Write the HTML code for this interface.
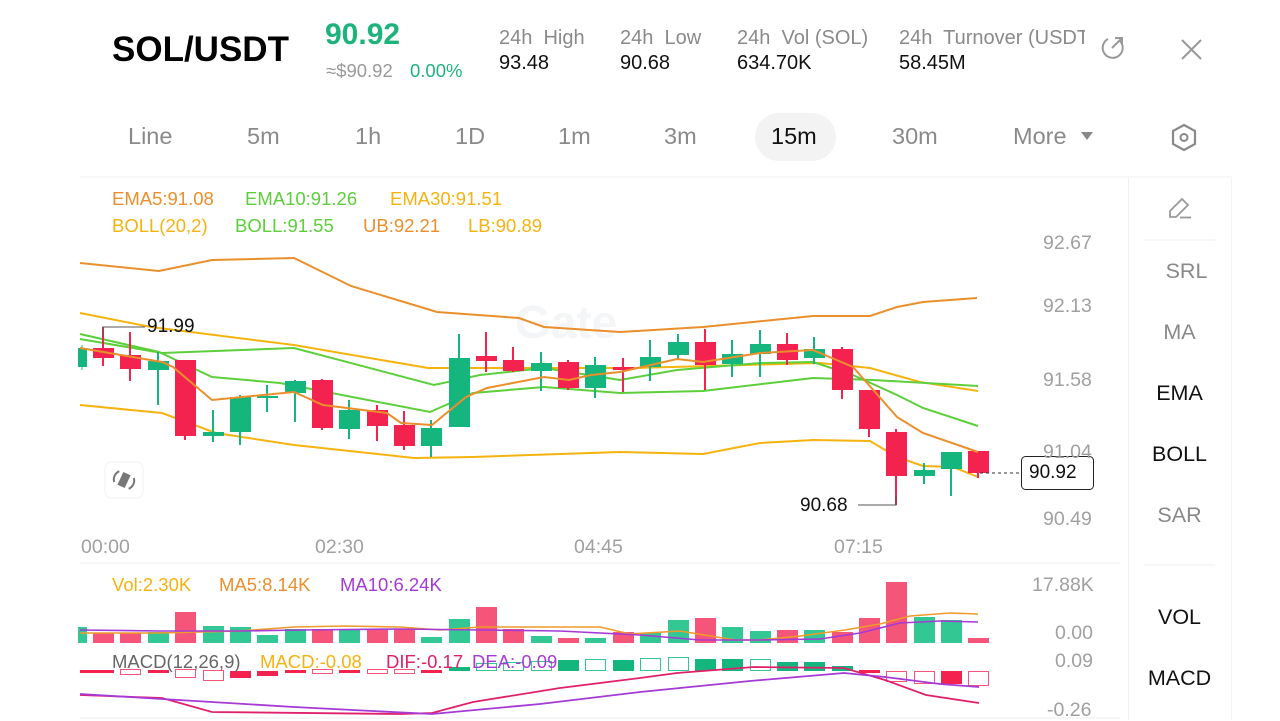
<!DOCTYPE html>
<html><head><meta charset="utf-8">
<style>
*{margin:0;padding:0;box-sizing:border-box}
body{width:1280px;height:720px;overflow:hidden;background:#fff;font-family:"Liberation Sans",Arial,sans-serif;position:relative}
.t{position:absolute;white-space:nowrap;line-height:1}
.g{color:#8a8a8a}
.ax{position:absolute;color:#a0a0a0;font-size:19.5px;line-height:1;white-space:nowrap}
.tab{position:absolute;top:125px;font-size:23.5px;color:#8a8a8a;line-height:1}
.sb{position:absolute;left:1128px;width:103px;text-align:center;font-size:21.5px;line-height:1}
.lg{font-size:18.5px}
</style></head><body>

<div class="t" style="left:112px;top:32px;font-size:35px;font-weight:bold;color:#000">SOL/USDT</div>
<div class="t" style="left:325px;top:20px;font-size:30px;font-weight:bold;color:#1eb27c">90.92</div>
<div class="t g" style="left:326px;top:62px;font-size:18.5px;color:#999">≈$90.92</div>
<div class="t" style="left:410px;top:62px;font-size:18.5px;color:#1eb27c">0.00%</div>
<div class="t g" style="left:499px;top:28px;font-size:20px">24h&nbsp; High</div>
<div class="t" style="left:499px;top:53px;font-size:20px;color:#111">93.48</div>
<div class="t g" style="left:620px;top:28px;font-size:20px">24h&nbsp; Low</div>
<div class="t" style="left:620px;top:53px;font-size:20px;color:#111">90.68</div>
<div class="t g" style="left:737px;top:28px;font-size:20px">24h&nbsp; Vol (SOL)</div>
<div class="t" style="left:737px;top:53px;font-size:20px;color:#111">634.70K</div>
<div class="t g" style="left:899px;top:28px;font-size:20px;width:186px;overflow:hidden">24h&nbsp; Turnover (USDT)</div>
<div class="t" style="left:899px;top:53px;font-size:20px;color:#111">58.45M</div>

<svg style="position:absolute;left:0;top:0" width="1280" height="720">
 <path d="M1120 41 A10 10 0 1 1 1108 39" fill="none" stroke="#999" stroke-width="2"/>
 <path d="M1112 48 L1122 38 M1115 38 L1122 38 L1122 45" fill="none" stroke="#999" stroke-width="2"/>
 <path d="M1182 40 L1201 59 M1201 40 L1182 59" stroke="#999" stroke-width="2"/>
 <path d="M1184 125 L1195 131 L1195 144 L1184 150 L1173 144 L1173 131 Z" fill="none" stroke="#888" stroke-width="2.2"/>
 <circle cx="1184" cy="137.5" r="3.5" fill="none" stroke="#888" stroke-width="2"/>
 <path d="M1081 132 L1093 132 L1087 140 Z" fill="#888"/>
 <line x1="80" y1="177" x2="1231" y2="177" stroke="#f0f0f0"/>
 <line x1="1128.5" y1="177" x2="1128.5" y2="720" stroke="#f0f0f0"/>
 <line x1="1231.5" y1="177" x2="1231.5" y2="720" stroke="#f4f4f4"/>
 <line x1="80" y1="563" x2="1120" y2="563" stroke="#eee"/>
 <line x1="80" y1="718" x2="1120" y2="718" stroke="#eee"/>
 <line x1="1144" y1="240" x2="1215" y2="240" stroke="#eee"/>
 <line x1="1144" y1="565" x2="1215" y2="565" stroke="#eee"/>
 <path d="M1170 217 L1170 211 L1182 199 L1188 205 L1176 217 Z" fill="none" stroke="#999" stroke-width="1.8"/>
 <line x1="1180" y1="217.5" x2="1191" y2="217.5" stroke="#999" stroke-width="1.8"/>
 <text x="515" y="338" font-size="46" font-weight="bold" fill="#f4f5f6" font-family="Liberation Sans">Gate</text>
 <rect x="105" y="462" width="38" height="36" rx="6" fill="#fff" stroke="#f2f2f2"/>
 <g transform="rotate(25 124 480)"><rect x="120" y="473" width="8" height="14" fill="#777"/>
 <path d="M116 474 A9 9 0 0 0 116 486 M132 474 A9 9 0 0 1 132 486" fill="none" stroke="#777" stroke-width="2"/></g>

 <polyline fill="none" stroke="#ea8f2c" stroke-width="2" points="80,263 159,271 212,260 294,258 351,286 437,312 519,318 544,327 620,332 703,327 813,316 870,316 897,307 923,302 977,298"/>
 <polyline fill="none" stroke="#f5b30f" stroke-width="2" points="80,313 151,327 294,345 428,368 634,368 820,363 870,368 920,382 978,391"/>
 <polyline fill="none" stroke="#5ccf3a" stroke-width="2" points="80,334 159,352 212,377 280,383 430,412 473,393 544,387 620,393 703,391 813,378 873,380 978,386"/>
 <polyline fill="none" stroke="#5ccf3a" stroke-width="2" points="80,339 162,353 294,348 434,385 480,375 544,368 620,380 677,370 760,363 813,362 853,375 897,395 923,408 978,426"/>
 <polyline fill="none" stroke="#f5b30f" stroke-width="2" points="80,405 162,413 216,433 294,445 414,458 473,457 620,452 703,454 760,443 813,440 870,441 897,457 923,466 953,467 978,477"/>

 <g fill="#15b57e" stroke="#15b57e"><line x1="82" y1="345" x2="82" y2="370"/><rect x="78" y="348" width="9" height="19" stroke="none"/></g>
 <g stroke-width="2">
 <g stroke="#f3224f" fill="#f3224f">
  <line x1="103" y1="327" x2="103" y2="366"/><rect x="93" y="348" width="21" height="10" stroke="none"/>
  <line x1="130" y1="332" x2="130" y2="381"/><rect x="120" y="355" width="21" height="14" stroke="none"/>
  <line x1="185" y1="360" x2="185" y2="440"/><rect x="175" y="360" width="21" height="76" stroke="none"/>
  <line x1="322" y1="379" x2="322" y2="430"/><rect x="312" y="380" width="21" height="48" stroke="none"/>
  <line x1="377" y1="405" x2="377" y2="441"/><rect x="367" y="410" width="21" height="16" stroke="none"/>
  <line x1="404" y1="411" x2="404" y2="450"/><rect x="394" y="425" width="21" height="21" stroke="none"/>
  <line x1="486" y1="332" x2="486" y2="372"/><rect x="476" y="356" width="21" height="5" stroke="none"/>
  <line x1="513" y1="347" x2="513" y2="372"/><rect x="503" y="360" width="21" height="11" stroke="none"/>
  <line x1="568" y1="360" x2="568" y2="390"/><rect x="558" y="362" width="21" height="26" stroke="none"/>
  <line x1="623" y1="358" x2="623" y2="392"/><rect x="613" y="367" width="21" height="3" stroke="none"/>
  <line x1="705" y1="329" x2="705" y2="390"/><rect x="695" y="342" width="21" height="23" stroke="none"/>
  <line x1="787" y1="333" x2="787" y2="365"/><rect x="777" y="344" width="21" height="16" stroke="none"/>
  <line x1="842" y1="347" x2="842" y2="399"/><rect x="832" y="349" width="21" height="41" stroke="none"/>
  <line x1="869" y1="390" x2="869" y2="437"/><rect x="859" y="390" width="21" height="39" stroke="none"/>
  <line x1="896" y1="429" x2="896" y2="505"/><rect x="886" y="432" width="21" height="44" stroke="none"/>
  <line x1="978" y1="451" x2="978" y2="478"/><rect x="968" y="451" width="21" height="22" stroke="none"/>
 </g>
 <g stroke="#15b57e" fill="#15b57e">
  <line x1="158" y1="352" x2="158" y2="405"/><rect x="148" y="361" width="21" height="9" stroke="none"/>
  <line x1="213" y1="410" x2="213" y2="442"/><rect x="203" y="432" width="21" height="4" stroke="none"/>
  <line x1="240" y1="395" x2="240" y2="445"/><rect x="230" y="397" width="21" height="35" stroke="none"/>
  <line x1="267" y1="385" x2="267" y2="412"/><rect x="257" y="396" width="21" height="2" stroke="none"/>
  <line x1="295" y1="380" x2="295" y2="422"/><rect x="285" y="381" width="21" height="12" stroke="none"/>
  <line x1="349" y1="400" x2="349" y2="439"/><rect x="339" y="410" width="21" height="19" stroke="none"/>
  <line x1="431" y1="420" x2="431" y2="457"/><rect x="421" y="428" width="21" height="18" stroke="none"/>
  <line x1="459" y1="334" x2="459" y2="427"/><rect x="449" y="358" width="21" height="69" stroke="none"/>
  <line x1="541" y1="352" x2="541" y2="391"/><rect x="531" y="363" width="21" height="8" stroke="none"/>
  <line x1="595" y1="357" x2="595" y2="398"/><rect x="585" y="365" width="21" height="23" stroke="none"/>
  <line x1="650" y1="340" x2="650" y2="381"/><rect x="640" y="357" width="21" height="10" stroke="none"/>
  <line x1="678" y1="334" x2="678" y2="360"/><rect x="668" y="342" width="21" height="13" stroke="none"/>
  <line x1="732" y1="340" x2="732" y2="377"/><rect x="722" y="354" width="21" height="10" stroke="none"/>
  <line x1="760" y1="330" x2="760" y2="377"/><rect x="750" y="344" width="21" height="10" stroke="none"/>
  <line x1="814" y1="337" x2="814" y2="364"/><rect x="804" y="349" width="21" height="9" stroke="none"/>
  <line x1="924" y1="463" x2="924" y2="484"/><rect x="914" y="470" width="21" height="6" stroke="none"/>
  <line x1="951" y1="452" x2="951" y2="496"/><rect x="941" y="452" width="21" height="17" stroke="none"/>
 </g>
 </g>
 <polyline fill="none" stroke="#ea8f2c" stroke-width="2" points="80,348 162,362 173,367 212,400 294,392 323,405 387,413 401,423 432,425 466,397 487,388 544,377 569,380 591,375 620,372 677,359 703,362 760,353 813,350 853,367 897,417 923,433 978,452"/>

 <polyline fill="none" stroke="#555" stroke-width="1" points="103,337 103,327 145,327"/>
 <polyline fill="none" stroke="#555" stroke-width="1" points="858,505 896,505 896,495"/>
 <line x1="980" y1="473" x2="1021" y2="473" stroke="#333" stroke-dasharray="3,3"/>
 <rect x="1021.5" y="456.5" width="72" height="33" rx="4" fill="#fff" stroke="#222"/>

 <g fill="#f6557a">
  <rect x="93" y="633" width="21" height="10"/><rect x="120" y="633" width="21" height="10"/><rect x="175" y="612" width="21" height="31"/>
  <rect x="312" y="629" width="21" height="14"/><rect x="367" y="629" width="21" height="14"/><rect x="394" y="629" width="21" height="14"/>
  <rect x="476" y="607" width="21" height="36"/><rect x="503" y="629" width="21" height="14"/><rect x="558" y="638" width="21" height="5"/>
  <rect x="613" y="632" width="21" height="11"/><rect x="695" y="618" width="21" height="25"/><rect x="777" y="630" width="21" height="13"/>
  <rect x="832" y="632" width="21" height="11"/><rect x="859" y="618" width="21" height="25"/><rect x="886" y="582" width="21" height="61"/>
  <rect x="968" y="638" width="21" height="5"/>
 </g>
 <g fill="#33c794">
  <rect x="78" y="627" width="9" height="16"/><rect x="148" y="632" width="21" height="11"/><rect x="203" y="626" width="21" height="17"/>
  <rect x="230" y="627" width="21" height="16"/><rect x="257" y="635" width="21" height="8"/><rect x="285" y="629" width="21" height="14"/>
  <rect x="339" y="629" width="21" height="14"/><rect x="421" y="637" width="21" height="6"/><rect x="449" y="619" width="21" height="24"/>
  <rect x="531" y="636" width="21" height="7"/><rect x="585" y="638" width="21" height="5"/><rect x="640" y="633" width="21" height="10"/>
  <rect x="668" y="620" width="21" height="23"/><rect x="722" y="627" width="21" height="16"/><rect x="750" y="631" width="21" height="12"/>
  <rect x="804" y="630" width="21" height="13"/><rect x="914" y="617" width="21" height="26"/><rect x="941" y="620" width="21" height="23"/>
 </g>
 <polyline fill="none" stroke="#f09a2a" stroke-width="1.6" points="80,633 160,633 240,631 294,627 345,626 400,627 440,630 480,627 540,627 600,627 630,634 680,631 735,640 760,640 800,636 845,630 880,624 910,616 950,613 978,614"/>
 <polyline fill="none" stroke="#a53ad6" stroke-width="1.6" points="80,630 160,631 240,631 300,630 400,629 480,630 560,631 640,635 700,640 760,640 820,639 860,633 900,623 940,621 978,622"/>

 <g fill="#f3224f"><rect x="80" y="670" width="14" height="3"/><rect x="93" y="670" width="21" height="3"/><rect x="148" y="670" width="21" height="3"/>
 <rect x="230" y="671" width="21" height="7"/><rect x="257" y="671" width="21" height="5"/><rect x="285" y="670" width="21" height="3"/><rect x="339" y="670" width="21" height="3"/><rect x="421" y="670" width="21" height="3"/>
 <rect x="859" y="670" width="21" height="3"/><rect x="941" y="671" width="21" height="13"/></g>
 <g fill="none" stroke="#f5557a" stroke-width="1"><rect x="120.5" y="669.5" width="20" height="5"/><rect x="175.5" y="669.5" width="20" height="8"/><rect x="203.5" y="670.5" width="20" height="10"/>
 <rect x="312.5" y="669.5" width="20" height="4"/><rect x="367.5" y="669.5" width="20" height="4"/><rect x="394.5" y="669.5" width="20" height="4"/>
 <rect x="886.5" y="671.5" width="20" height="10"/><rect x="914.5" y="671.5" width="20" height="12"/><rect x="968.5" y="671.5" width="20" height="14"/></g>
 <g fill="#15b57e"><rect x="449" y="667" width="21" height="4"/><rect x="558" y="660" width="21" height="11"/><rect x="613" y="660" width="21" height="11"/>
 <rect x="695" y="659" width="21" height="12"/><rect x="722" y="659" width="21" height="12"/><rect x="777" y="662" width="21" height="9"/><rect x="804" y="662" width="21" height="9"/><rect x="832" y="666" width="21" height="5"/></g>
 <g fill="none" stroke="#33c794" stroke-width="1"><rect x="476.5" y="663.5" width="20" height="7"/><rect x="503.5" y="662.5" width="20" height="8"/><rect x="531.5" y="661.5" width="20" height="9"/>
 <rect x="585.5" y="659.5" width="20" height="11"/><rect x="640.5" y="658.5" width="20" height="12"/><rect x="668.5" y="657.5" width="20" height="13"/><rect x="750.5" y="659.5" width="20" height="11"/></g>
 <polyline fill="none" stroke="#e0206a" stroke-width="1.8" points="80,695 162,698 212,712 401,714 432,713 473,702 560,688 640,678 677,673 754,667 844,668 885,680 926,695 979,703"/>
 <polyline fill="none" stroke="#a53ad6" stroke-width="1.8" points="80,694 294,707 432,714 540,704 640,692 750,681 844,673 885,677 940,684 979,687"/>
</svg>

<div class="t" style="left:147px;top:317px;font-size:19px;color:#111">91.99</div>
<div class="t" style="left:800px;top:496px;font-size:19px;color:#111">90.68</div>
<div class="t" style="left:1029px;top:463px;font-size:19px;color:#111">90.92</div>

<div class="tab" style="left:128px">Line</div>
<div class="tab" style="left:247px">5m</div>
<div class="tab" style="left:355px">1h</div>
<div class="tab" style="left:455px">1D</div>
<div class="tab" style="left:558px">1m</div>
<div class="tab" style="left:664px">3m</div>
<div style="position:absolute;left:755px;top:113px;width:81px;height:48px;border-radius:24px;background:#f3f3f3"></div>
<div class="tab" style="left:771px;color:#111">15m</div>
<div class="tab" style="left:892px">30m</div>
<div class="tab" style="left:1013px">More</div>

<div class="t lg" style="left:112px;top:190px;color:#ea8f2c">EMA5:91.08</div>
<div class="t lg" style="left:245px;top:190px;color:#5ccf3a">EMA10:91.26</div>
<div class="t lg" style="left:390px;top:190px;color:#f5b30f">EMA30:91.51</div>
<div class="t lg" style="left:112px;top:217px;color:#f5b30f">BOLL(20,2)</div>
<div class="t lg" style="left:235px;top:217px;color:#5ccf3a">BOLL:91.55</div>
<div class="t lg" style="left:363px;top:217px;color:#ea8f2c">UB:92.21</div>
<div class="t lg" style="left:468px;top:217px;color:#f5b30f">LB:90.89</div>

<div class="t lg" style="left:112px;top:576px;color:#f5b30f">Vol:2.30K</div>
<div class="t lg" style="left:219px;top:576px;color:#ea8f2c">MA5:8.14K</div>
<div class="t lg" style="left:340px;top:576px;color:#a53ad6">MA10:6.24K</div>
<div class="t lg" style="left:112px;top:653px;color:#666">MACD(12,26,9)</div>
<div class="t lg" style="left:260px;top:653px;color:#f5b30f">MACD:-0.08</div>
<div class="t lg" style="left:386px;top:653px;color:#e0206a">DIF:-0.17</div>
<div class="t lg" style="left:472px;top:653px;color:#a53ad6">DEA:-0.09</div>

<div class="ax" style="left:1043px;top:234px">92.67</div>
<div class="ax" style="left:1043px;top:297px">92.13</div>
<div class="ax" style="left:1043px;top:371px">91.58</div>
<div class="ax" style="left:1043px;top:443px">91.04</div>
<div class="ax" style="left:1043px;top:510px">90.49</div>
<div class="ax" style="left:1032px;top:576px">17.88K</div>
<div class="ax" style="left:1055px;top:624px">0.00</div>
<div class="ax" style="left:1055px;top:652px">0.09</div>
<div class="ax" style="left:1047px;top:701px">-0.26</div>
<div class="ax" style="left:81px;top:538px">00:00</div>
<div class="ax" style="left:315px;top:538px">02:30</div>
<div class="ax" style="left:574px;top:538px">04:45</div>
<div class="ax" style="left:834px;top:538px">07:15</div>

<div class="sb" style="top:261px;color:#888;padding-left:14px">SRL</div>
<div class="sb" style="top:322px;color:#888">MA</div>
<div class="sb" style="top:383px;color:#111">EMA</div>
<div class="sb" style="top:444px;color:#111">BOLL</div>
<div class="sb" style="top:505px;color:#888">SAR</div>
<div class="sb" style="top:607px;color:#111">VOL</div>
<div class="sb" style="top:668px;color:#111">MACD</div>
</body></html>
